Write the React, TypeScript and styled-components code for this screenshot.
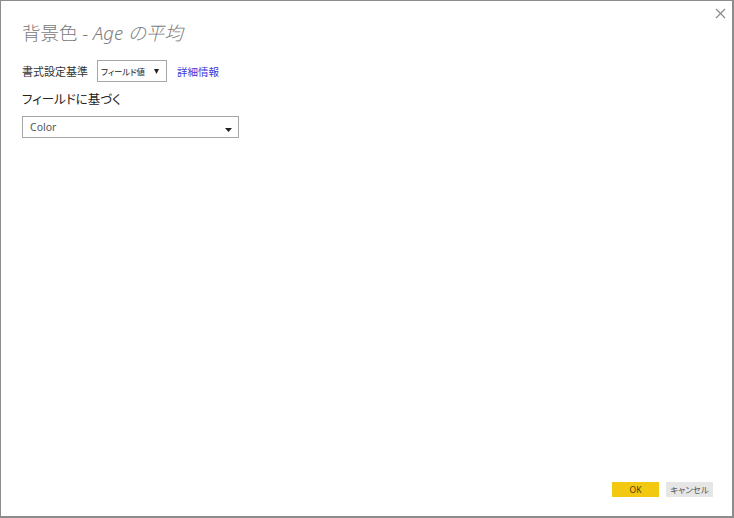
import * as React from "react";
import styled, { createGlobalStyle } from "styled-components";

const GlobalStyle = createGlobalStyle`
  html, body {
    margin: 0;
    padding: 0;
    background: #fff;
  }
  body {
    font-family: "Noto Sans", "Noto Sans CJK JP", sans-serif;
    font-feature-settings: "palt";
  }
`;

const Dialog = styled.div`
  position: relative;
  box-sizing: border-box;
  width: 734px;
  height: 518px;
  border: 1px solid #8c8c8c;
  border-right-width: 2px;
  border-bottom-width: 2px;
  background: #fff;
  display: flex;
  flex-direction: column;
  padding: 18px 19px 19px 21px;
`;

const CloseButton = styled.button`
  position: absolute;
  top: 5px;
  right: 5px;
  width: 14px;
  height: 14px;
  padding: 0;
  border: none;
  background: none;
  display: flex;
  align-items: center;
  justify-content: center;
`;

const Title = styled.h1`
  margin: 0;
  font-size: 18.5px;
  font-weight: 300;
  color: #7a7a7a;
  line-height: 28px;

  em {
    font-style: italic;
  }
`;

const FormatRow = styled.div`
  display: flex;
  align-items: center;
  margin-top: 13px;
  height: 22px;
`;

const Label = styled.span`
  font-size: 11px;
  color: #333;
  margin-right: 9px;
`;

const SmallSelect = styled.div`
  box-sizing: border-box;
  width: 70px;
  height: 22px;
  border: 1px solid #a6a6a6;
  display: flex;
  align-items: center;
  justify-content: space-between;
  padding: 0 7px 0 3px;
  font-size: 8.5px;
  letter-spacing: -0.2px;
  color: #222;
  white-space: nowrap;
`;

const Link = styled.a`
  margin-left: 10px;
  font-size: 10.5px;
  color: #3b3bd8;
  text-decoration: none;
`;

const SectionLabel = styled.div`
  margin-top: 8px;
  font-size: 12.5px;
  color: #222;
  line-height: 20px;
`;

const FieldSelect = styled.div`
  box-sizing: border-box;
  margin-top: 6px;
  width: 217px;
  height: 22px;
  border: 1px solid #a6a6a6;
  display: flex;
  align-items: center;
  justify-content: space-between;
  padding: 0 6px 0 7px;
  font-size: 10.5px;
  color: #555;
`;

const Footer = styled.div`
  margin-top: auto;
  display: flex;
  justify-content: flex-end;
  gap: 7px;
`;

const Button = styled.button<{ $primary?: boolean }>`
  width: 47px;
  height: 15px;
  border: none;
  padding: 0;
  font-family: inherit;
  font-feature-settings: "palt";
  font-size: 8.5px;
  line-height: 15px;
  color: ${(p) => (p.$primary ? "#4a3b00" : "#555")};
  background: ${(p) => (p.$primary ? "#f2c811" : "#e6e6e6")};
`;

export default function App() {
  return (
    <>
      <GlobalStyle />
      <Dialog>
        <CloseButton aria-label="閉じる">
          <svg width="11" height="11" viewBox="0 0 11 11">
            <path d="M1 1 L10 10 M10 1 L1 10" stroke="#8a8a8a" strokeWidth="1.2" />
          </svg>
        </CloseButton>
        <Title>
          背景色 - <em>Age の平均</em>
        </Title>
        <FormatRow>
          <Label>書式設定基準</Label>
          <SmallSelect>
            <span>フィールド値</span>
            <svg width="5" height="5" viewBox="0 0 5 5">
              <path d="M0 0 H5 L2.5 5 Z" fill="#222" />
            </svg>
          </SmallSelect>
          <Link href="#">詳細情報</Link>
        </FormatRow>
        <SectionLabel>フィールドに基づく</SectionLabel>
        <FieldSelect>
          <span>Color</span>
          <svg width="7" height="4" viewBox="0 0 7 4" style={{ marginTop: 6 }}>
            <path d="M0 0 H7 L3.5 4 Z" fill="#222" />
          </svg>
        </FieldSelect>
        <Footer>
          <Button $primary>OK</Button>
          <Button>キャンセル</Button>
        </Footer>
      </Dialog>
    </>
  );
}
